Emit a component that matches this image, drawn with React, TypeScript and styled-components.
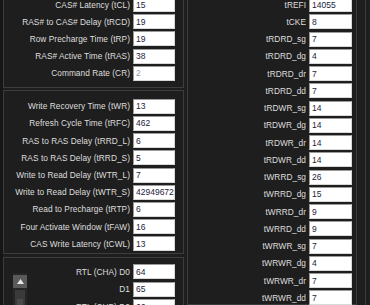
import styled, { createGlobalStyle } from "styled-components";

interface Timing {
  label: string;
  value: string;
  muted?: boolean;
}

const primary: Timing[] = [
  { label: "CAS# Latency (tCL)", value: "15" },
  { label: "RAS# to CAS# Delay (tRCD)", value: "19" },
  { label: "Row Precharge Time (tRP)", value: "19" },
  { label: "RAS# Active Time (tRAS)", value: "38" },
  { label: "Command Rate (CR)", value: "2", muted: true },
];

const secondary: Timing[] = [
  { label: "Write Recovery Time (tWR)", value: "13" },
  { label: "Refresh Cycle Time (tRFC)", value: "462" },
  { label: "RAS to RAS Delay (tRRD_L)", value: "6" },
  { label: "RAS to RAS Delay (tRRD_S)", value: "5" },
  { label: "Write to Read Delay (tWTR_L)", value: "7" },
  { label: "Write to Read Delay (tWTR_S)", value: "4294967295" },
  { label: "Read to Precharge (tRTP)", value: "6" },
  { label: "Four Activate Window (tFAW)", value: "16" },
  { label: "CAS Write Latency (tCWL)", value: "13" },
];

const rtl: Timing[] = [
  { label: "RTL (CHA) D0", value: "64" },
  { label: "D1", value: "65" },
  { label: "RTL (CHB) D0", value: "66" },
];

const turnaround: Timing[] = [
  { label: "tREFI", value: "14055" },
  { label: "tCKE", value: "8" },
  { label: "tRDRD_sg", value: "7" },
  { label: "tRDRD_dg", value: "4" },
  { label: "tRDRD_dr", value: "7" },
  { label: "tRDRD_dd", value: "7" },
  { label: "tRDWR_sg", value: "14" },
  { label: "tRDWR_dg", value: "14" },
  { label: "tRDWR_dr", value: "14" },
  { label: "tRDWR_dd", value: "14" },
  { label: "tWRRD_sg", value: "26" },
  { label: "tWRRD_dg", value: "15" },
  { label: "tWRRD_dr", value: "9" },
  { label: "tWRRD_dd", value: "9" },
  { label: "tWRWR_sg", value: "7" },
  { label: "tWRWR_dg", value: "4" },
  { label: "tWRWR_dr", value: "7" },
  { label: "tWRWR_dd", value: "7" },
];

const GlobalStyle = createGlobalStyle`
  html, body {
    margin: 0;
    padding: 0;
    background: #1e1e1e;
    overflow: hidden;
  }
  body {
    font-family: "Liberation Sans", Arial, sans-serif;
  }
`;

const Screen = styled.div`
  display: flex;
  width: 370px;
  height: 305px;
  overflow: hidden;
  background: #1e1e1e;
  border-left: 3px solid #161616;
  box-sizing: border-box;
`;

const LeftColumn = styled.div`
  display: flex;
  flex-direction: column;
  width: 181px;
  margin-top: -10px;
  flex-shrink: 0;
`;

const GroupBox = styled.div<{ $top: number; $bottom: number; $gap?: number }>`
  box-sizing: border-box;
  border: 1px solid #3d3d3d;
  padding: ${({ $top, $bottom }) => `${$top}px 8px ${$bottom}px 0`};
  margin-bottom: ${({ $gap }) => $gap ?? 0}px;
  display: flex;
  flex-direction: column;
  gap: 2.2px;
`;

const SplitBox = styled(GroupBox)`
  flex-direction: row;
  gap: 0;
  flex: 1;
`;

const Rows = styled.div<{ $pitch: number }>`
  flex: 1;
  display: flex;
  flex-direction: column;
  gap: ${({ $pitch }) => $pitch - 15}px;
`;

const RightPanel = styled.div`
  box-sizing: border-box;
  width: 170px;
  margin: -10px 0 0 3px;
  padding: 6px 4px 0 0;
  border: 1px solid #3d3d3d;
  display: flex;
  flex-direction: column;
  gap: 2.25px;
  flex-shrink: 0;
`;

const EdgeStrip = styled.div`
  width: 8px;
  flex-shrink: 0;
  border-right: 1px solid #3a3a3a;
`;

const Row = styled.div<{ $input: number }>`
  display: grid;
  grid-template-columns: 1fr ${({ $input }) => $input}px;
  column-gap: 3px;
  align-items: center;
  height: 15px;
`;

const Label = styled.span`
  text-align: right;
  white-space: nowrap;
  font-size: 8.3px;
  color: #dedede;
  letter-spacing: 0.05px;
`;

const Value = styled.input<{ $muted?: boolean }>`
  box-sizing: border-box;
  width: 100%;
  height: 15px;
  margin: 0;
  padding: 0 0 0 2px;
  border: 1px solid #9a9a9a;
  border-right-color: #d8d8d8;
  border-bottom-color: #d8d8d8;
  background: #ffffff;
  font-family: "Liberation Sans", Arial, sans-serif;
  font-size: 8.5px;
  color: ${({ $muted }) => ($muted ? "#9c9c9c" : "#1c1c3a")};
  outline: none;
`;

const ScrollTrack = styled.div`
  width: 14px;
  margin: 9px 0 0 9px;
  background: #262626;
  display: flex;
  flex-direction: column;
  align-items: center;
  gap: 2px;
  padding-top: 2px;
  flex-shrink: 0;
`;

const ScrollButton = styled.div`
  width: 14px;
  height: 13px;
  background: #5a5a5a;
  display: flex;
  align-items: center;
  justify-content: center;
`;

const ScrollThumb = styled.div`
  width: 10px;
  height: 24px;
  background: #3a3a3a;
  display: flex;
  align-items: center;
  justify-content: center;
  &::after {
    content: "";
    width: 6px;
    height: 6px;
    background: #4a4a4a;
  }
`;

const Field = ({ t, input }: { t: Timing; input: number }) => (
  <Row $input={input}>
    <Label>{t.label}</Label>
    <Value readOnly value={t.value} $muted={t.muted} />
  </Row>
);

export default function App() {
  return (
    <>
      <GlobalStyle />
      <Screen>
        <LeftColumn>
          <GroupBox $top={6} $bottom={6} $gap={2}>
            {primary.map((t) => (
              <Field key={t.label} t={t} input={42} />
            ))}
          </GroupBox>
          <GroupBox $top={8} $bottom={2} $gap={3}>
            {secondary.map((t) => (
              <Field key={t.label} t={t} input={42} />
            ))}
          </GroupBox>
          <SplitBox $top={6} $bottom={0}>
            <ScrollTrack>
              <ScrollButton>
                <svg width="7" height="5" viewBox="0 0 7 5">
                  <path d="M3.5 0 L7 5 L0 5 Z" fill="#e6e6e6" />
                </svg>
              </ScrollButton>
              <ScrollThumb />
            </ScrollTrack>
            <Rows $pitch={17.4}>
              {rtl.map((t) => (
                <Field key={t.label} t={t} input={42} />
              ))}
            </Rows>
          </SplitBox>
        </LeftColumn>
        <RightPanel>
          {turnaround.map((t) => (
            <Field key={t.label} t={t} input={43} />
          ))}
        </RightPanel>
        <EdgeStrip />
      </Screen>
    </>
  );
}
